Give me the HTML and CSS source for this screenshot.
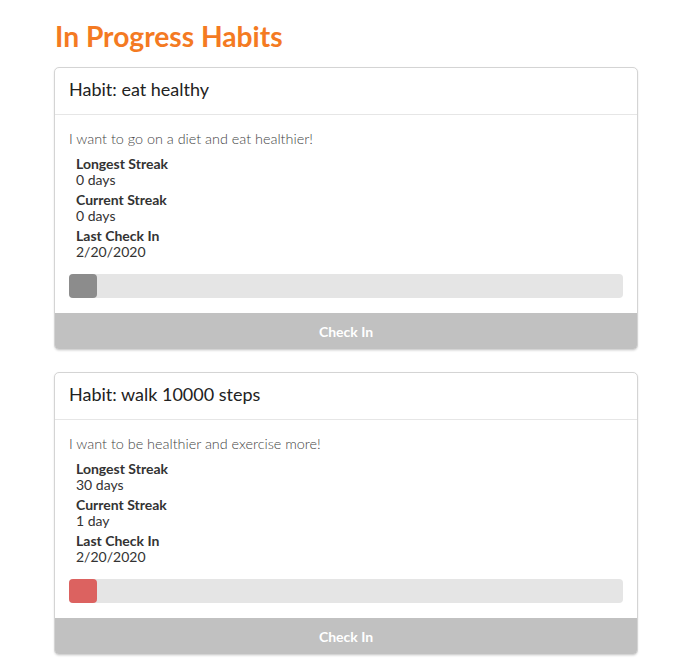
FILE: index.html
```html
<!DOCTYPE html>
<html>
<head>
<meta charset="utf-8">
<link rel="stylesheet" href="styles.css">
</head>
<body>
<div class="page">
  <h1 class="title">In Progress Habits</h1>
  <div class="card">
    <div class="card-header">Habit: eat healthy</div>
    <div class="card-body">
      <p class="desc">I want to go on a diet and eat healthier!</p>
      <div class="stats">
        <div class="stat"><div class="label">Longest Streak</div><div class="value">0 days</div></div>
        <div class="stat"><div class="label">Current Streak</div><div class="value">0 days</div></div>
        <div class="stat"><div class="label">Last Check In</div><div class="value">2/20/2020</div></div>
      </div>
      <div class="bar"><div class="fill fill-gray"></div></div>
    </div>
    <button class="checkin">Check In</button>
  </div>
  <div class="card">
    <div class="card-header">Habit: walk 10000 steps</div>
    <div class="card-body">
      <p class="desc">I want to be healthier and exercise more!</p>
      <div class="stats">
        <div class="stat"><div class="label">Longest Streak</div><div class="value">30 days</div></div>
        <div class="stat"><div class="label">Current Streak</div><div class="value">1 day</div></div>
        <div class="stat"><div class="label">Last Check In</div><div class="value">2/20/2020</div></div>
      </div>
      <div class="bar"><div class="fill fill-red"></div></div>
    </div>
    <button class="checkin">Check In</button>
  </div>
</div>
</body>
</html>
```
FILE: styles.css
```css
* { box-sizing: border-box; }
html, body { margin: 0; padding: 0; background: #fff; }
body { font-family: Lato, "Open Sans", sans-serif; color: #333; }
.page { width: 584px; margin-left: 54px; padding-top: 20px; }
.title {
  margin: 0 0 15px 1px;
  font-size: 28.2px;
  line-height: 32px;
  font-weight: 700;
  color: #f47a22;
}
.card {
  border: 1px solid #d4d4d4;
  border-radius: 5px;
  margin-bottom: 22px;
  box-shadow: 0 1px 2px rgba(0,0,0,0.12);
  overflow: hidden;
  background: #fff;
}
.card-header {
  padding: 10px 14px 13px;
  font-size: 18px;
  line-height: 23px;
  border-bottom: 1px solid #e6e6e6;
  color: #222;
}
.card-body { padding: 14px 14px 15px; }
.desc {
  margin: 0;
  font-size: 14.4px;
  line-height: 20px;
  font-weight: 300;
  color: #444;
}
.stats { margin: 7px 0 0 7px; }
.stat { margin-bottom: 4px; font-size: 14px; line-height: 16px; }
.stat:last-child { margin-bottom: 0; }
.label { font-weight: 700; color: #333; }
.value { color: #333; }
.bar {
  margin-top: 14px;
  height: 24px;
  background: #e5e5e5;
  border-radius: 4px;
}
.fill { width: 28px; height: 24px; border-radius: 4px; }
.fill-gray { background: #8c8c8c; }
.fill-red { background: #dc6260; }
.checkin {
  display: block;
  width: 100%;
  height: 36px;
  border: 0;
  margin: 0;
  background: #c1c1c1;
  color: #fff;
  font-family: Lato, sans-serif;
  font-size: 14px;
  font-weight: 700;
  cursor: pointer;
}
```
